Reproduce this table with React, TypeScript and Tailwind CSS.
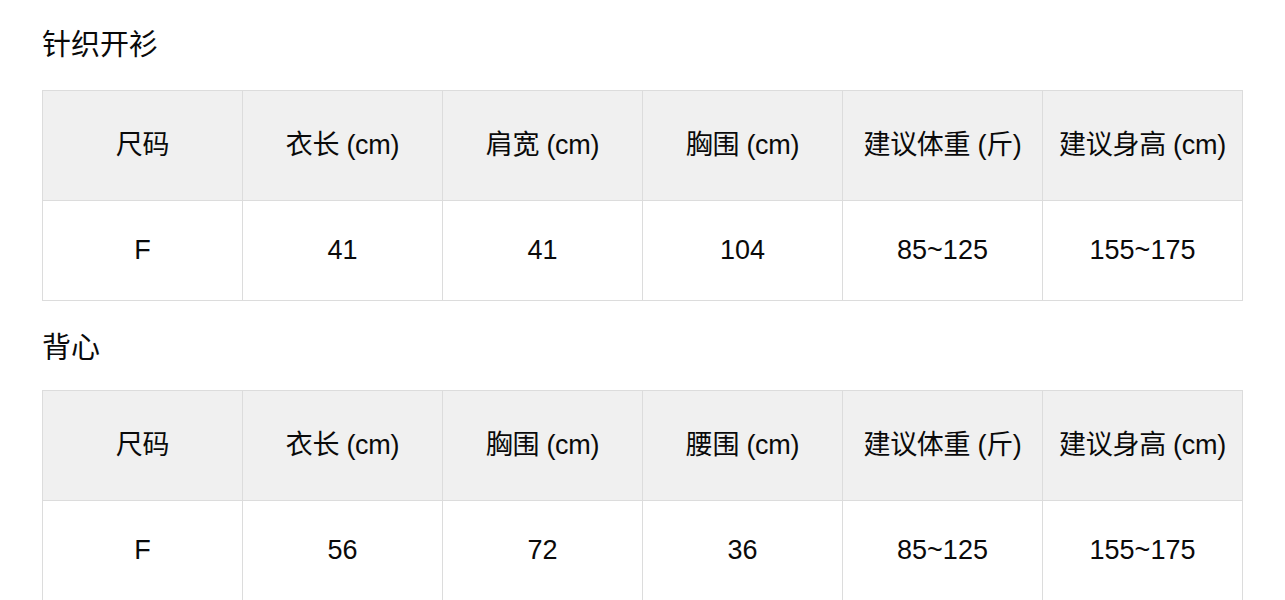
const font = { fontFamily: '"Liberation Sans", "Noto Sans CJK SC", sans-serif' };

type Section = { title: string; head: string[]; row: string[] };

const sections: Section[] = [
  {
    title: "针织开衫",
    head: ["尺码", "衣长 (cm)", "肩宽 (cm)", "胸围 (cm)", "建议体重 (斤)", "建议身高 (cm)"],
    row: ["F", "41", "41", "104", "85~125", "155~175"],
  },
  {
    title: "背心",
    head: ["尺码", "衣长 (cm)", "胸围 (cm)", "腰围 (cm)", "建议体重 (斤)", "建议身高 (cm)"],
    row: ["F", "56", "72", "36", "85~125", "155~175"],
  },
];

function SizeTable({ s }: { s: Section }) {
  return (
    <table className="w-[1201px] table-fixed border-collapse text-[27px] text-[#0a0a0a]">
      <thead>
        <tr className="h-[110px] bg-[#f0f0f0]">
          {s.head.map((h, i) => (
            <th key={i} className="border border-[#dcdcdc] px-0 text-center font-normal whitespace-nowrap tracking-[-0.3px]">
              {h}
            </th>
          ))}
        </tr>
      </thead>
      <tbody>
        <tr className="h-[100px]">
          {s.row.map((c, i) => (
            <td key={i} className="border border-[#dcdcdc] text-center">
              {c}
            </td>
          ))}
        </tr>
      </tbody>
    </table>
  );
}

export default function App() {
  return (
    <div className="bg-white pl-[42px] pt-[25px] h-[600px] overflow-hidden" style={font}>
      {sections.map((s, i) => (
        <div key={i} className={i > 0 ? "mt-[27px]" : ""}>
          <h2 className={`h-[40px] leading-[40px] text-[29px] font-normal text-[#0a0a0a] ${i > 0 ? "mb-[22px]" : "mb-[25px]"}`}>
            {s.title}
          </h2>
          <SizeTable s={s} />
        </div>
      ))}
    </div>
  );
}
